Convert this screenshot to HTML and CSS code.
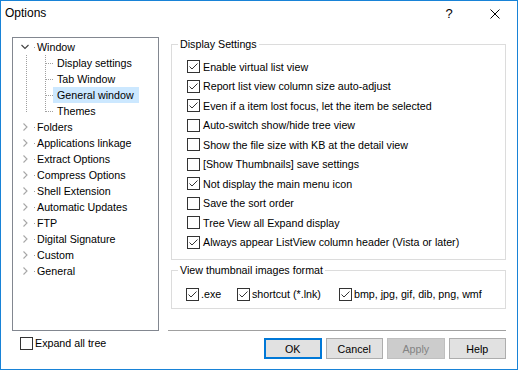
FILE: index.html
```html
<!DOCTYPE html>
<html>
<head>
<meta charset="utf-8">
<link rel="stylesheet" href="styles.css">
</head>
<body>
<div class="window">
  <div class="titlebar">
    <span class="title">Options</span>
    <span class="tb-btn tb-help">?</span>
    <span class="tb-btn tb-close"><svg width="10" height="10" viewBox="0 0 10 10"><path d="M0.5 0.5 L9.5 9.5 M9.5 0.5 L0.5 9.5" stroke="#000" stroke-width="1" fill="none"/></svg></span>
  </div>
  <div class="content">
    <div class="left">
      <div class="tree">
        <div class="tree-row">
          <span class="exp"><svg width="8" height="8" viewBox="0 0 8 8"><polyline points="0.5,2 4,5.5 7.5,2" fill="none" stroke="#404040" stroke-width="1.1"/></svg></span>
          <span class="conn"></span>
          <span class="tree-label root">Window</span>
        </div>
        <div class="tree-child"><span class="tree-label">Display settings</span></div>
        <div class="tree-child"><span class="tree-label">Tab Window</span></div>
        <div class="tree-child"><span class="tree-label selected">General window</span></div>
        <div class="tree-child last"><span class="tree-label">Themes</span></div>
        <div class="tree-row"><span class="exp"><svg width="8" height="8" viewBox="0 0 8 8"><polyline points="2.5,0.5 6,4 2.5,7.5" fill="none" stroke="#a6a6a6" stroke-width="1.1"/></svg></span><span class="conn"></span><span class="tree-label root">Folders</span></div>
        <div class="tree-row"><span class="exp"><svg width="8" height="8" viewBox="0 0 8 8"><polyline points="2.5,0.5 6,4 2.5,7.5" fill="none" stroke="#a6a6a6" stroke-width="1.1"/></svg></span><span class="conn"></span><span class="tree-label root">Applications linkage</span></div>
        <div class="tree-row"><span class="exp"><svg width="8" height="8" viewBox="0 0 8 8"><polyline points="2.5,0.5 6,4 2.5,7.5" fill="none" stroke="#a6a6a6" stroke-width="1.1"/></svg></span><span class="conn"></span><span class="tree-label root">Extract Options</span></div>
        <div class="tree-row"><span class="exp"><svg width="8" height="8" viewBox="0 0 8 8"><polyline points="2.5,0.5 6,4 2.5,7.5" fill="none" stroke="#a6a6a6" stroke-width="1.1"/></svg></span><span class="conn"></span><span class="tree-label root">Compress Options</span></div>
        <div class="tree-row"><span class="exp"><svg width="8" height="8" viewBox="0 0 8 8"><polyline points="2.5,0.5 6,4 2.5,7.5" fill="none" stroke="#a6a6a6" stroke-width="1.1"/></svg></span><span class="conn"></span><span class="tree-label root">Shell Extension</span></div>
        <div class="tree-row"><span class="exp"><svg width="8" height="8" viewBox="0 0 8 8"><polyline points="2.5,0.5 6,4 2.5,7.5" fill="none" stroke="#a6a6a6" stroke-width="1.1"/></svg></span><span class="conn"></span><span class="tree-label root">Automatic Updates</span></div>
        <div class="tree-row"><span class="exp"><svg width="8" height="8" viewBox="0 0 8 8"><polyline points="2.5,0.5 6,4 2.5,7.5" fill="none" stroke="#a6a6a6" stroke-width="1.1"/></svg></span><span class="conn"></span><span class="tree-label root">FTP</span></div>
        <div class="tree-row"><span class="exp"><svg width="8" height="8" viewBox="0 0 8 8"><polyline points="2.5,0.5 6,4 2.5,7.5" fill="none" stroke="#a6a6a6" stroke-width="1.1"/></svg></span><span class="conn"></span><span class="tree-label root">Digital Signature</span></div>
        <div class="tree-row"><span class="exp"><svg width="8" height="8" viewBox="0 0 8 8"><polyline points="2.5,0.5 6,4 2.5,7.5" fill="none" stroke="#a6a6a6" stroke-width="1.1"/></svg></span><span class="conn"></span><span class="tree-label root">Custom</span></div>
        <div class="tree-row"><span class="exp"><svg width="8" height="8" viewBox="0 0 8 8"><polyline points="2.5,0.5 6,4 2.5,7.5" fill="none" stroke="#a6a6a6" stroke-width="1.1"/></svg></span><span class="conn"></span><span class="tree-label root">General</span></div>
      </div>
      <div class="check expand"><span class="box"></span><span>Expand all tree</span></div>
    </div>
    <div class="right">
      <fieldset class="group group-display">
        <legend>Display Settings</legend>
        <div class="check row"><span class="box"><svg width="11" height="11" viewBox="0 0 11 11"><polyline points="1.5,5.5 4,8 9.5,2.5" fill="none" stroke="#333" stroke-width="1"/></svg></span><span>Enable virtual list view</span></div>
        <div class="check row"><span class="box"><svg width="11" height="11" viewBox="0 0 11 11"><polyline points="1.5,5.5 4,8 9.5,2.5" fill="none" stroke="#333" stroke-width="1"/></svg></span><span>Report list view column size auto-adjust</span></div>
        <div class="check row"><span class="box"><svg width="11" height="11" viewBox="0 0 11 11"><polyline points="1.5,5.5 4,8 9.5,2.5" fill="none" stroke="#333" stroke-width="1"/></svg></span><span>Even if a item lost focus, let the item be selected</span></div>
        <div class="check row"><span class="box"></span><span>Auto-switch show/hide tree view</span></div>
        <div class="check row"><span class="box"></span><span>Show the file size with KB at the detail view</span></div>
        <div class="check row"><span class="box"></span><span>[Show Thumbnails] save settings</span></div>
        <div class="check row"><span class="box"><svg width="11" height="11" viewBox="0 0 11 11"><polyline points="1.5,5.5 4,8 9.5,2.5" fill="none" stroke="#333" stroke-width="1"/></svg></span><span>Not display the main menu icon</span></div>
        <div class="check row"><span class="box"></span><span>Save the sort order</span></div>
        <div class="check row"><span class="box"></span><span>Tree View all Expand display</span></div>
        <div class="check row"><span class="box"><svg width="11" height="11" viewBox="0 0 11 11"><polyline points="1.5,5.5 4,8 9.5,2.5" fill="none" stroke="#333" stroke-width="1"/></svg></span><span>Always appear ListView column header (Vista or later)</span></div>
      </fieldset>
      <fieldset class="group group-thumb">
        <legend>View thumbnail images format</legend>
        <div class="thumb-row">
          <div class="check fmt fmt-exe"><span class="box"><svg width="11" height="11" viewBox="0 0 11 11"><polyline points="1.5,5.5 4,8 9.5,2.5" fill="none" stroke="#333" stroke-width="1"/></svg></span><span>.exe</span></div>
          <div class="check fmt fmt-lnk"><span class="box"><svg width="11" height="11" viewBox="0 0 11 11"><polyline points="1.5,5.5 4,8 9.5,2.5" fill="none" stroke="#333" stroke-width="1"/></svg></span><span>shortcut (*.lnk)</span></div>
          <div class="check fmt"><span class="box"><svg width="11" height="11" viewBox="0 0 11 11"><polyline points="1.5,5.5 4,8 9.5,2.5" fill="none" stroke="#333" stroke-width="1"/></svg></span><span>bmp, jpg, gif, dib, png, wmf</span></div>
        </div>
      </fieldset>
      <div class="sep"></div>
      <div class="buttons">
        <span class="btn btn-default">OK</span>
        <span class="btn">Cancel</span>
        <span class="btn btn-disabled">Apply</span>
        <span class="btn">Help</span>
      </div>
    </div>
  </div>
</div>
</body>
</html>
```
FILE: styles.css
```css
html, body {
  margin: 0;
  padding: 0;
  background: #ffffff;
}
body {
  font-family: "Liberation Sans", Arial, sans-serif;
  font-size: 10.7px;
  color: #000;
}
.window {
  width: 518px;
  height: 370px;
  box-sizing: border-box;
  border: 1px solid #1883d7;
  background: #ffffff;
  overflow: hidden;
}
.titlebar {
  height: 25px;
  display: flex;
  align-items: center;
}
.title {
  font-size: 12px;
  line-height: 25px;
  padding-left: 4px;
  flex: 1;
}
.tb-btn {
  width: 46px;
  height: 25px;
  display: flex;
  align-items: center;
  justify-content: center;
}
.tb-help {
  font-size: 13px;
  padding-left: 2px;
  box-sizing: border-box;
}
.tb-close svg {
  display: block;
  margin-left: 1px;
}
.content {
  display: flex;
  padding: 11px 11px 0 11px;
}
.left {
  width: 147px;
  flex: none;
}
.tree {
  height: 294px;
  box-sizing: border-box;
  border: 1px solid #828790;
  padding-top: 1px;
}
.tree-row {
  height: 16px;
  display: flex;
  align-items: center;
}
.exp {
  width: 8px;
  height: 8px;
  margin-left: 8px;
}
.exp svg {
  display: block;
}
.conn {
  width: 8px;
  height: 1px;
  background: linear-gradient(to right, transparent 5px, #a0a0a0 5px, #a0a0a0 6px, transparent 6px);
}
.tree-label {
  line-height: 16px;
  white-space: nowrap;
  padding: 0 5px 0 4px;
}
.tree-label.root {
  padding-left: 0;
}
.tree-label.selected {
  background: #cce8ff;
}
.tree-child {
  height: 16px;
  display: flex;
  align-items: center;
  padding-left: 40px;
  background-image:
    repeating-linear-gradient(to bottom, #a0a0a0 0, #a0a0a0 1px, transparent 1px, transparent 2px),
    repeating-linear-gradient(to bottom, #a0a0a0 0, #a0a0a0 1px, transparent 1px, transparent 2px),
    repeating-linear-gradient(to right, #a0a0a0 0, #a0a0a0 1px, transparent 1px, transparent 2px);
  background-size: 1px 100%, 1px 100%, 8px 1px;
  background-position: 13px 0, 32px 0, 33px 8px;
  background-repeat: no-repeat;
}
.tree-child.last {
  background-size: 1px 9px, 1px 9px, 8px 1px;
}
.check {
  display: flex;
  align-items: center;
  white-space: nowrap;
}
.box {
  width: 13px;
  height: 13px;
  box-sizing: border-box;
  border: 1px solid #333;
  background: #fff;
  flex: none;
  margin-right: 3px;
}
.box svg {
  display: block;
}
.expand {
  margin-top: 4px;
  height: 16px;
  padding-left: 8px;
}
.expand .box {
  margin-right: 2px;
}
.right {
  flex: 1;
  margin-left: 9px;
  min-width: 0;
}
.group {
  margin: 0 0 0 3px;
  border: 1px solid #dcdcdc;
  min-width: 0;
}
.group legend {
  margin-left: 6px;
  padding: 0 2px;
  line-height: 15px;
}
.group-display {
  padding: 5px 0 7px 0;
}
.row {
  height: 19.5px;
  padding-left: 15px;
}
.group-thumb {
  margin-top: 3px;
  padding: 6.5px 0 3.5px 0;
}
.thumb-row {
  display: flex;
  height: 19.5px;
  padding-left: 14px;
}
.fmt-exe {
  width: 51px;
}
.fmt-lnk {
  width: 102px;
}
.fmt .box {
  margin-right: 2px;
}
.sep {
  height: 1px;
  background: #a0a0a0;
  margin-top: 21.5px;
}
.buttons {
  margin-top: 7px;
  display: flex;
  justify-content: flex-end;
  gap: 4px;
}
.btn {
  width: 57.5px;
  height: 21px;
  box-sizing: border-box;
  border: 1px solid #adadad;
  background: #e1e1e1;
  display: flex;
  align-items: center;
  justify-content: center;
}
.btn-default {
  border: 2px solid #0078d7;
}
.btn-disabled {
  border-color: #bfbfbf;
  background: #cccccc;
  color: #838383;
}
```
